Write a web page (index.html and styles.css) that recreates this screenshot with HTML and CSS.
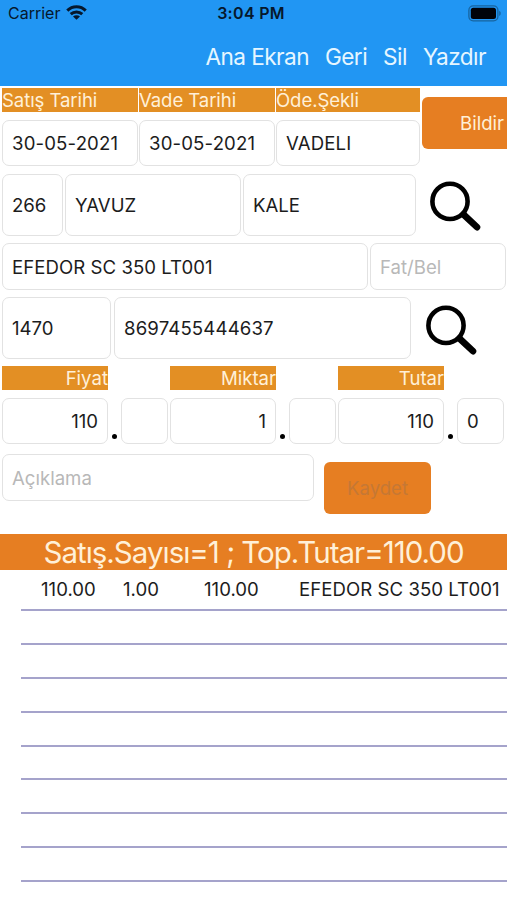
FILE: index.html
```html
<!DOCTYPE html>
<html lang="tr">
<head>
<meta charset="utf-8">
<title>Satış</title>
<link rel="stylesheet" href="styles.css">
</head>
<body>
<header class="topbar">
  <div class="status">
    <div class="carrier"><span>Carrier</span>
      <svg class="wifi" width="21" height="15" viewBox="0 0 21 15"><g fill="none" stroke="#06182c" stroke-width="3"><path d="M1.3 5.6C6.4.4 14.6.4 19.7 5.6"/><path d="M4.7 9.2C8 6.1 13 6.1 16.3 9.2"/></g><path d="M10.5 14.8L7 11.4c2-1.7 5-1.7 7 0z" fill="#06182c"/></svg>
    </div>
    <div class="clock">3:04 PM</div>
    <svg class="battery" width="34" height="17" viewBox="0 0 34 17"><rect x=".9" y=".9" width="29" height="15" rx="4.3" fill="none" stroke="#17649f" stroke-width="1.3"/><rect x="2.8" y="2.8" width="25.2" height="11.2" rx="2.5" fill="#000309"/><path d="M31.2 5.8c2 .8 2 4.4 0 5.2z" fill="#17649f"/></svg>
  </div>
  <nav class="menu"><a>Ana Ekran</a><a>Geri</a><a>Sil</a><a>Yazdır</a></nav>
</header>
<main>
  <section class="sale">
    <div class="sale-fields">
      <div class="row labels"><div class="label date">Satış Tarihi</div><div class="label date">Vade Tarihi</div><div class="label pay">Öde.Şekli</div></div>
      <div class="row"><div class="field date">30-05-2021</div><div class="field date">30-05-2021</div><div class="field pay">VADELI</div></div>
    </div>
    <button class="btn report">Bildir</button>
  </section>
  <section class="row customer">
    <div class="field tall c-no">266</div><div class="field tall c-name">YAVUZ</div><div class="field tall c-last">KALE</div>
    <svg class="search" width="54" height="54" viewBox="0 0 54 54"><circle cx="21" cy="21.4" r="17.6" fill="none" stroke="#000" stroke-width="4.6"/><path d="M34.5 34.5L48 47.2" stroke="#000" stroke-width="6.6" stroke-linecap="round"/></svg>
  </section>
  <section class="row product">
    <div class="field p-name">EFEDOR SC 350 LT001</div><div class="field p-doc hint">Fat/Bel</div>
  </section>
  <section class="row code">
    <div class="field tall k-no">1470</div><div class="field tall k-bar">8697455444637</div>
    <svg class="search" width="54" height="54" viewBox="0 0 54 54"><circle cx="21" cy="22.4" r="17.6" fill="none" stroke="#000" stroke-width="4.6"/><path d="M34.5 35.5L48 48.2" stroke="#000" stroke-width="6.6" stroke-linecap="round"/></svg>
  </section>
  <section class="amounts">
    <div class="amount"><div class="label right">Fiyat</div><div class="pair"><div class="field num">110</div><i class="dot"></i><div class="field frac"></div></div></div>
    <div class="amount"><div class="label right">Miktar</div><div class="pair"><div class="field num">1</div><i class="dot"></i><div class="field frac"></div></div></div>
    <div class="amount"><div class="label right">Tutar</div><div class="pair"><div class="field num">110</div><i class="dot"></i><div class="field frac">0</div></div></div>
  </section>
  <section class="save">
    <div class="field note hint">Açıklama</div><button class="btn submit" disabled>Kaydet</button>
  </section>
  <h1 class="summary">Satış.Sayısı=1 ; Top.Tutar=110.00</h1>
  <div class="list">
    <div class="item first"><span>110.00</span><span>1.00</span><span>110.00</span><span class="title">EFEDOR SC 350 LT001</span></div>
    <div class="item"></div><div class="item"></div><div class="item"></div><div class="item"></div>
    <div class="item"></div><div class="item"></div><div class="item"></div><div class="item"></div>
  </div>
</main>
</body>
</html>
```
FILE: styles.css
```css
* { box-sizing: border-box; }
body { margin: 0; width: 507px; height: 900px; overflow: hidden; background: #fff; color: #1c1c1c; font-family: Inter, "Liberation Sans", sans-serif; font-size: 18.6px; }
.topbar { height: 86px; background: #2196f3; }
.status { height: 26px; display: grid; grid-template-columns: 1fr auto 1fr; align-items: center; padding: 0 5px 0 8px; color: #06182c; }
.carrier { display: flex; align-items: center; gap: 6px; font-size: 16px; }
.wifi { margin-top: -1px; }
.clock { font-size: 16px; font-weight: 600; letter-spacing: .3px; margin: 0 4px 0 -4px; }
.battery { justify-self: end; margin-right: 0; }
.menu { height: 60px; display: flex; justify-content: flex-end; align-items: center; gap: 16px; padding-right: 21px; color: #e6f6ff; font-size: 22.6px; letter-spacing: -.55px; }
.row { display: flex; gap: 2px; }
.label { height: 24px; line-height: 24px; background: #e38f24; color: #fff0d8; white-space: nowrap; }
.label.right { width: 106px; text-align: right; }
.field { height: 47px; display: flex; align-items: center; padding: 0 9px; border: 1px solid #e2e2e2; border-radius: 7px; background: #fff; white-space: nowrap; }
.tall { height: 62px; }
.hint { color: #b8b8b8; }
.btn { font: inherit; border: 0; border-radius: 6px; background: #e67e22; height: 52px; padding: 0; }
.sale { display: flex; height: 85px; padding: 2px 0 0 1px; }
.sale-fields { width: 419px; }
.sale .labels { gap: 1px; padding-left: 1px; margin-bottom: 8px; letter-spacing: -.1px; }
.sale .row:not(.labels) { gap: 1px; padding-left: 1px; letter-spacing: .15px; }
.sale .field { height: 46px; }
.date { width: 136px; }
.pay { width: 144px; }
.report { flex: none; width: 96px; margin: 9px 0 0 2px; color: #fff0d8; text-align: left; padding-left: 38px; }
.customer { margin: 3px 0 0 2px; }
.c-no { width: 61px; }
.c-name { width: 176px; }
.c-last { width: 173px; }
.search { margin: 6px 0 0 11px; }
.product { margin: 7px 0 0 2px; }
.p-name { width: 366px; letter-spacing: .05px; }
.p-doc { width: 136px; }
.code { margin: 7px 0 0 2px; gap: 3px; }
.k-no { width: 109px; }
.k-bar { width: 297px; letter-spacing: .15px; }
.amounts { display: flex; gap: 1px; margin: 7px 0 0 1px; }
.amount { width: 167px; }
.amount .label { margin-left: 1px; }
.pair { display: flex; margin: 8px 0 0 1px; }
.pair .field { height: 46px; }
.num { width: 106px; justify-content: flex-end; }
.frac { width: 47px; }
.dot { width: 5px; height: 5px; border-radius: 50%; background: #000; margin: 36px 4px 0; }
.save { display: flex; margin: 10px 0 0 2px; }
.note { width: 312px; }
.submit { width: 107px; margin: 8px 0 0 10px; color: #c57835; }
.summary { height: 36px; margin: 20px 0 0; background: #e67e22; color: #fff0d8; font-size: 29.5px; font-weight: 400; line-height: 37px; letter-spacing: -1px; text-align: center; white-space: nowrap; }
.list { margin-left: 21px; }
.item { height: 33.9px; border-bottom: 2px solid #a5a3cb; }
.first { height: 41px; display: grid; grid-template-columns: 82px 81px 95px auto; align-items: center; padding: 0 0 2px 20px; white-space: nowrap; }
.title { letter-spacing: .05px; }
```
